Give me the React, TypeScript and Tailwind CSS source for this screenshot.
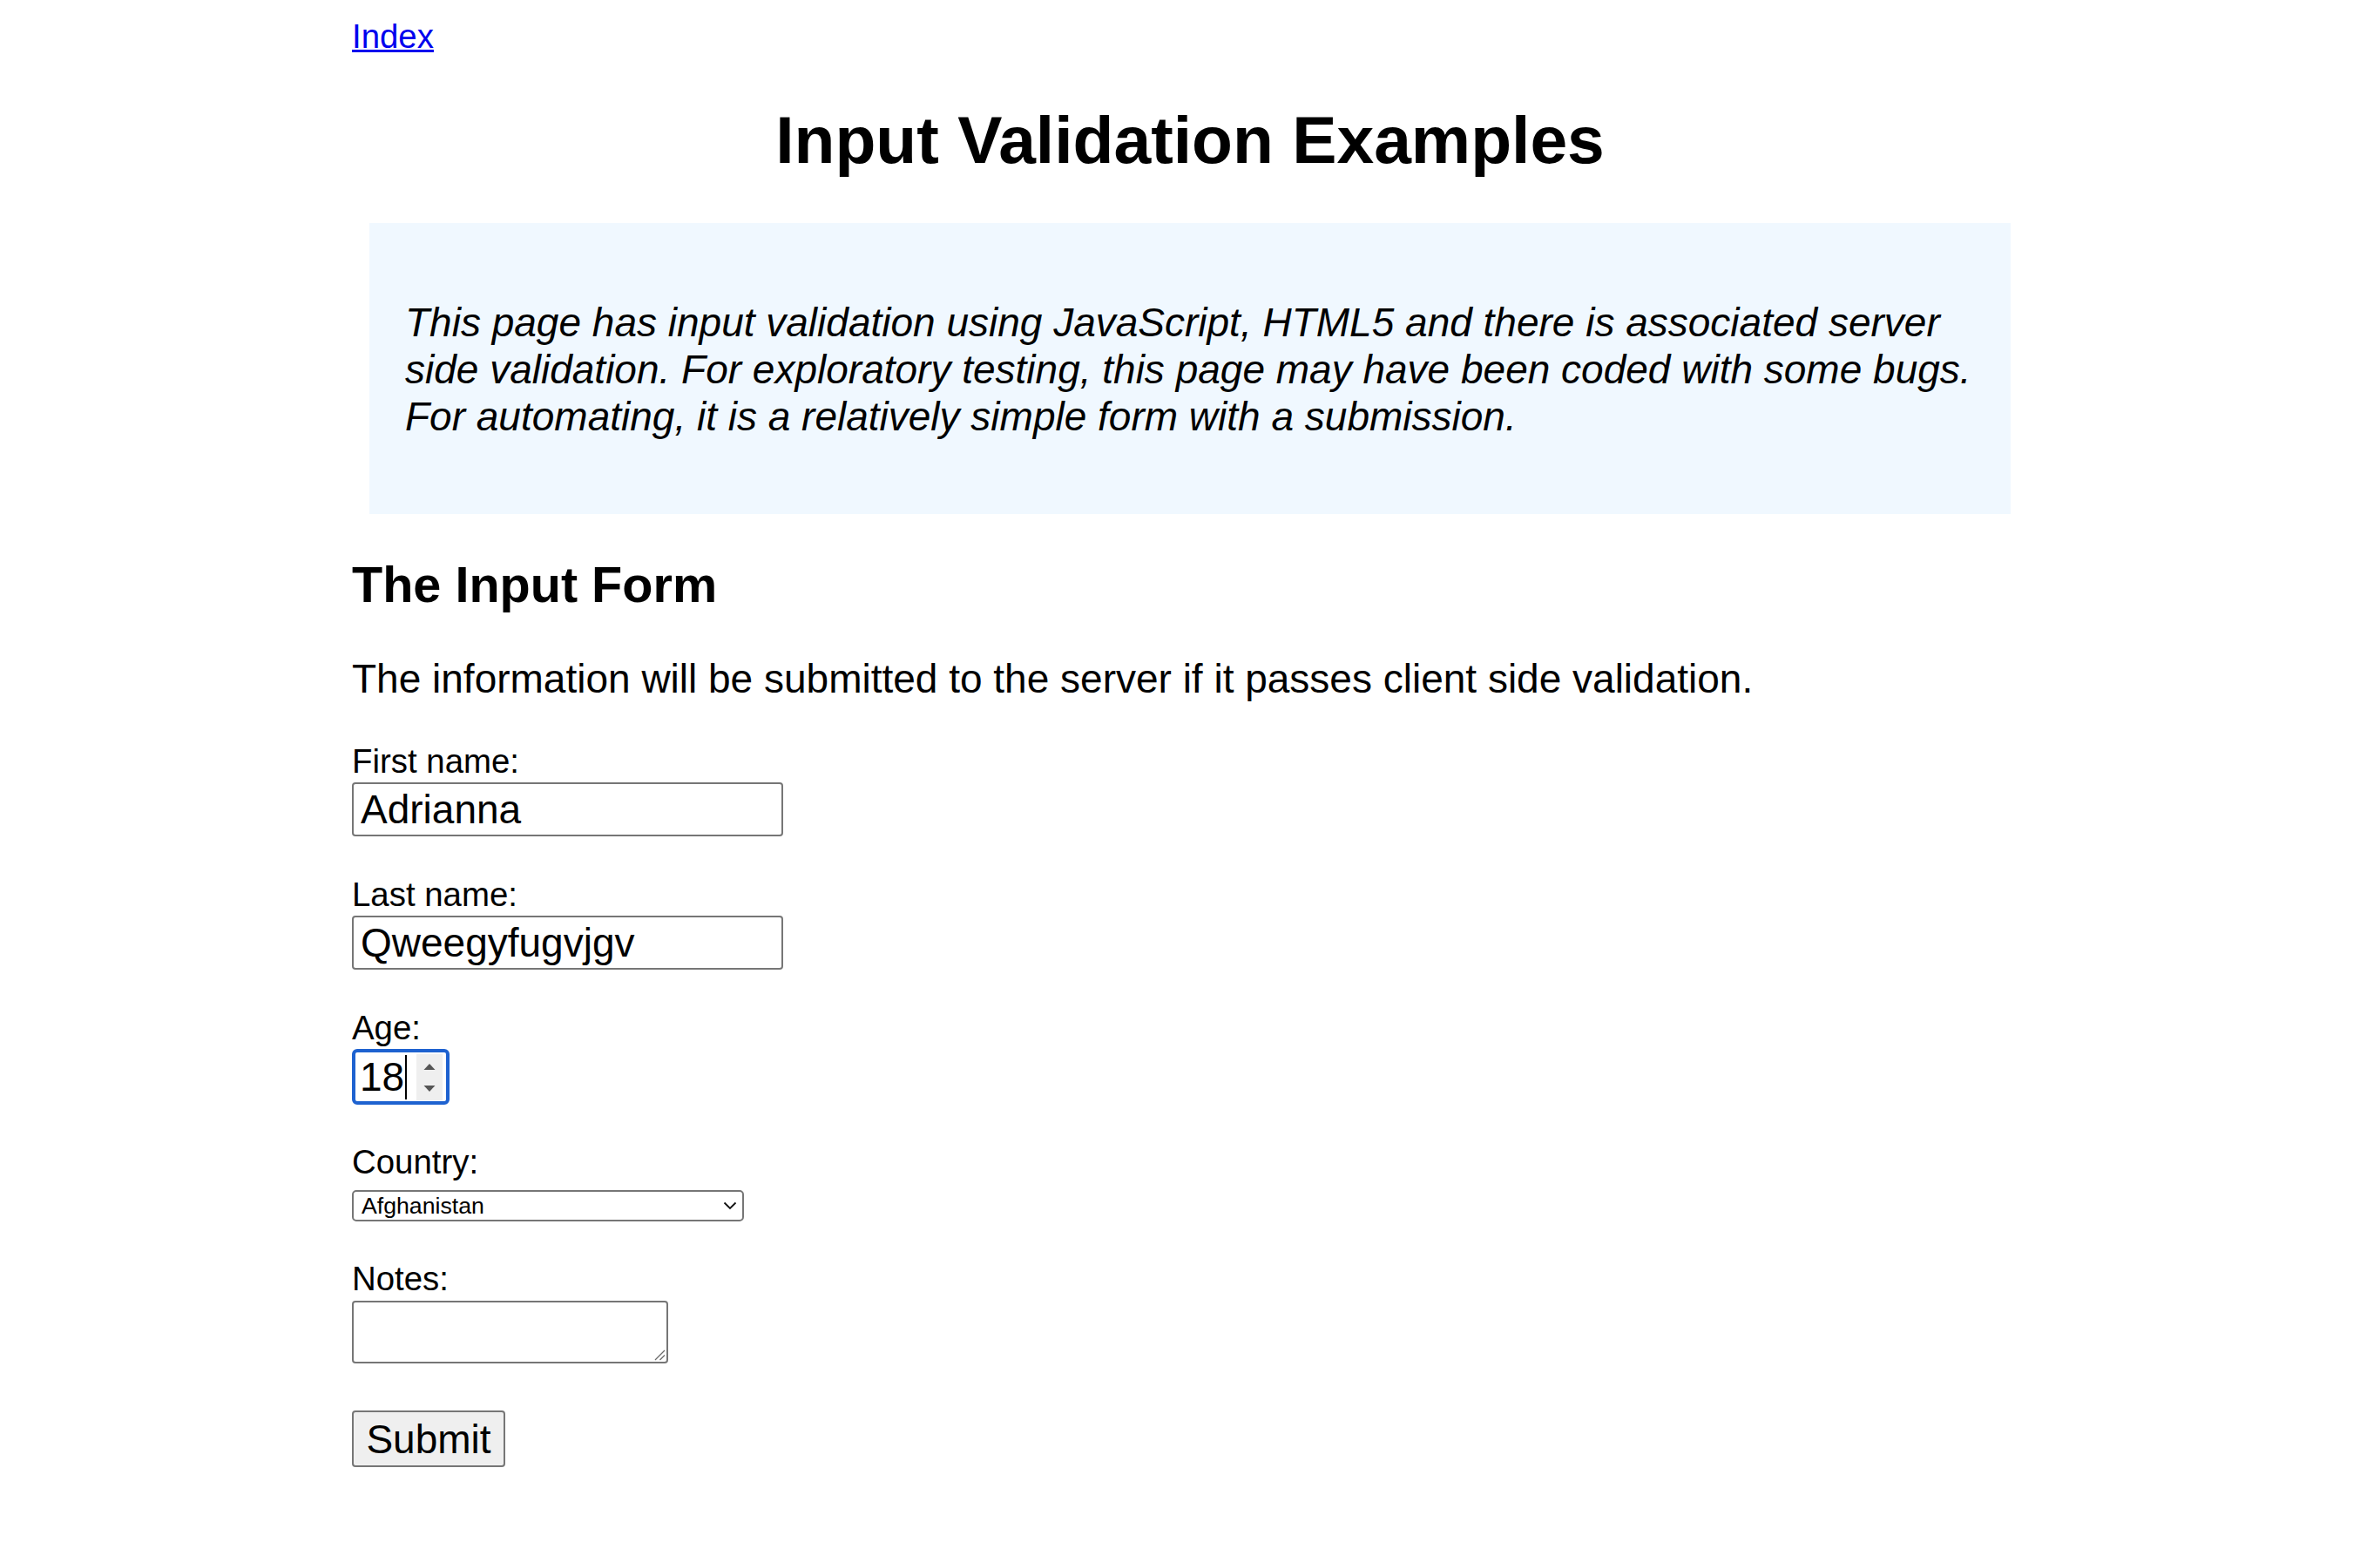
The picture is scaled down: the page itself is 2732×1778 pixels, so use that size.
export default function App() {
  return (
    <div className="min-h-screen bg-white font-['Liberation_Sans',Arial,sans-serif] text-[38.4px] text-black">
      <div className="mx-auto w-[1924px] pt-[20px] pb-[80px]">
        {/* Top link */}
        <div className="leading-[44px]">
          <a href="#" className="text-[#0000ee] underline">
            Index
          </a>
        </div>

        <h1 className="mt-[53px] text-center text-[76.8px] font-bold leading-[87px]">
          Input Validation Examples
        </h1>

        {/* Intro box */}
        <div className="mx-[20px] mt-[52px] bg-[#f0f8ff] pl-[41px] pr-[14px] pt-[87px] pb-[85px]">
          <p className="whitespace-nowrap text-[46px] italic leading-[54px]">
            This page has input validation using JavaScript, HTML5 and there is associated server
            <br />
            side validation. For exploratory testing, this page may have been coded with some bugs.
            <br />
            For automating, it is a relatively simple form with a submission.
          </p>
        </div>

        <h2 className="mt-[49px] text-[57.6px] font-bold leading-[65px]">The Input Form</h2>
        <p className="mt-[49px] text-[46px] leading-[52px]">
          The information will be submitted to the server if it passes client side validation.
        </p>

        <form className="flex flex-col items-start" onSubmit={(e) => e.preventDefault()}>
          {/* First name */}
          <label className="mt-[47px] leading-[44px]">First name:</label>
          <input
            readOnly
            value="Adrianna"
            className="mt-[2px] h-[62px] w-[495px] rounded-[4px] border-2 border-[#767676] px-[8px] text-[46px] leading-[52px] outline-none"
          />

          {/* Last name */}
          <label className="mt-[45px] leading-[44px]">Last name:</label>
          <input
            readOnly
            value="Qweegyfugvjgv"
            className="mt-[2px] h-[62px] w-[495px] rounded-[4px] border-2 border-[#767676] px-[8px] text-[46px] leading-[52px] outline-none"
          />

          {/* Age, focused with spinner */}
          <label className="mt-[45px] leading-[44px]">Age:</label>
          <div className="mt-[2px] flex h-[64px] w-[112px] items-center rounded-[6px] border-[4px] border-[#1e62d0] pl-[5px] pr-[4px]">
            <span className="text-[46px] leading-none">18</span>
            <span className="ml-[1px] h-[51px] w-[2px] bg-black" />
            <div className="ml-auto h-[53px] w-[30px] bg-[#efefef]">
              <svg width="30" height="53" viewBox="0 0 30 53">
                <polygon points="8.5,18 21.5,18 15,11" fill="#555" />
                <polygon points="8.5,36 21.5,36 15,43" fill="#555" />
              </svg>
            </div>
          </div>

          {/* Country */}
          <label className="mt-[44px] leading-[44px]">Country:</label>
          <div className="mt-[10px] flex h-[36px] w-[450px] items-center justify-between rounded-[5px] border-2 border-[#767676] pl-[9px] pr-[6px]">
            <span className="text-[26.67px] leading-none">Afghanistan</span>
            <svg width="16" height="10" viewBox="0 0 16 10">
              <polyline points="1.5,1.5 8,8 14.5,1.5" fill="none" stroke="#111" strokeWidth="1.8" />
            </svg>
          </div>

          {/* Notes */}
          <label className="mt-[44px] leading-[44px]">Notes:</label>
          <div className="relative mt-[3px]">
            <textarea
              readOnly
              className="block h-[72px] w-[363px] resize-none rounded-[4px] border-2 border-[#767676] outline-none"
            />
            <svg
              className="absolute bottom-[3px] right-[3px]"
              width="14"
              height="14"
              viewBox="0 0 14 14"
            >
              <line x1="13" y1="2" x2="2" y2="13" stroke="#6b6b6b" strokeWidth="1.2" />
              <line x1="13" y1="7.5" x2="7.5" y2="13" stroke="#6b6b6b" strokeWidth="1.2" />
            </svg>
          </div>

          <button
            type="submit"
            className="mt-[54px] h-[65px] w-[176px] rounded-[4px] border-2 border-[#767676] bg-[#efefef] text-[46px] leading-none"
          >
            Submit
          </button>
        </form>
      </div>
    </div>
  );
}
